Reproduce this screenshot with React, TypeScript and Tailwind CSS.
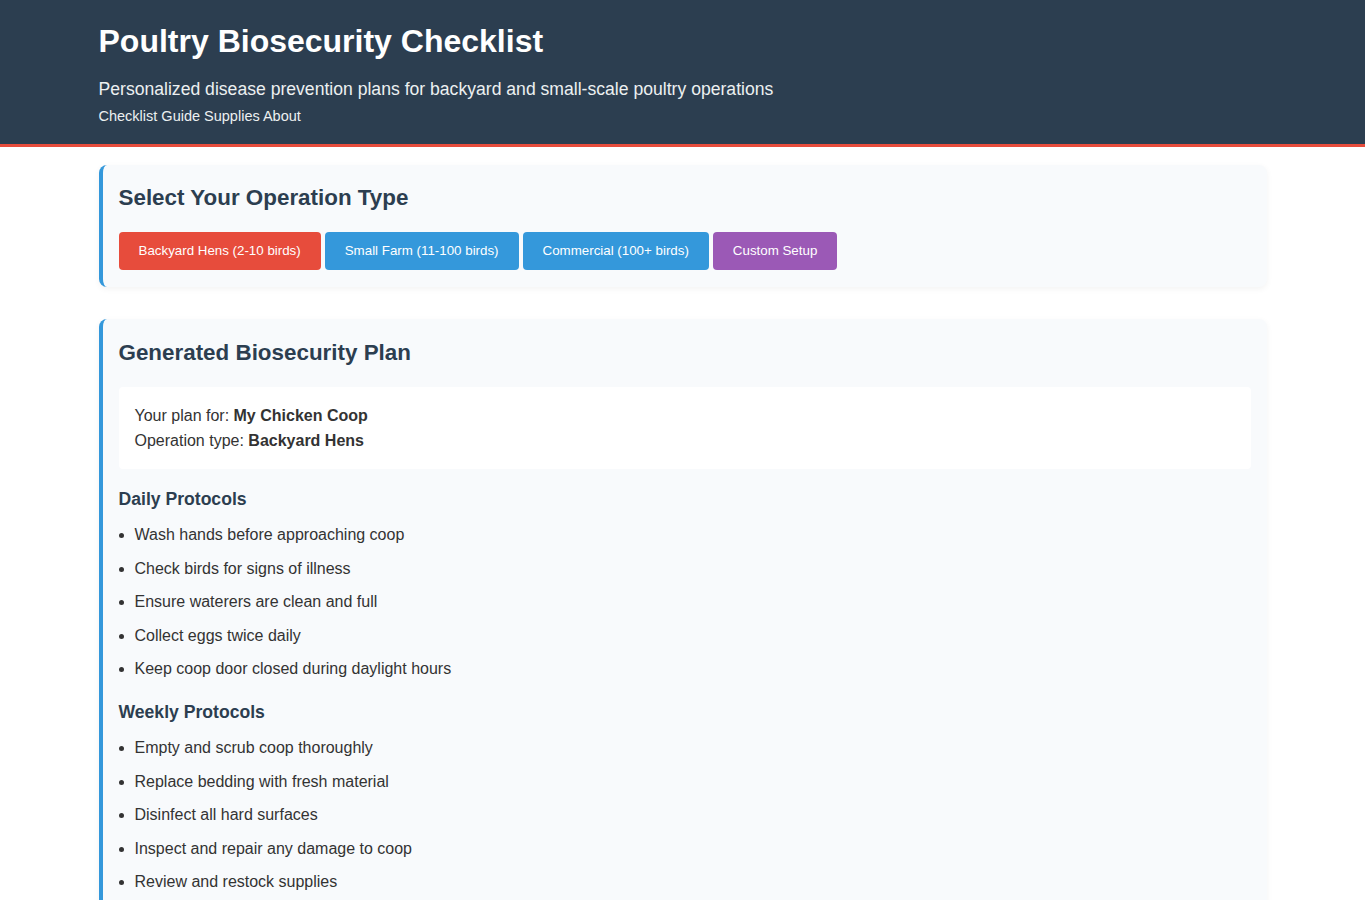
const daily = [
  "Wash hands before approaching coop",
  "Check birds for signs of illness",
  "Ensure waterers are clean and full",
  "Collect eggs twice daily",
  "Keep coop door closed during daylight hours",
];

const weekly = [
  "Empty and scrub coop thoroughly",
  "Replace bedding with fresh material",
  "Disinfect all hard surfaces",
  "Inspect and repair any damage to coop",
  "Review and restock supplies",
];

function ProtocolList({ title, items }: { title: string; items: string[] }) {
  return (
    <div>
      <h3 className="mt-4 mb-2 text-[17.6px] font-bold leading-[29px] text-[#2c3e50]">{title}</h3>
      <ul className="list-disc pl-4">
        {items.map((item) => (
          <li key={item} className="mb-2 leading-[25.6px]">
            {item}
          </li>
        ))}
      </ul>
    </div>
  );
}

export default function App() {
  return (
    <div className="min-h-screen bg-white text-[16px] text-[#333]" style={{ fontFamily: '"Liberation Sans", Arial, sans-serif' }}>
      <header className="bg-[#2c3e50] border-b-[3px] border-[#e74c3c] pt-[23px] pb-[20px] text-white">
        <div className="mx-auto max-w-[1200px] px-4">
          <h1 className="text-[32px] font-bold leading-[37px]">Poultry Biosecurity Checklist</h1>
          <p className="mt-[19px] text-[17.6px] leading-[21px] text-[#ecf0f1]">
            Personalized disease prevention plans for backyard and small-scale poultry operations
          </p>
          <nav className="mt-[8px] text-[14.5px] leading-[16px] text-[#ecf0f1]">Checklist Guide Supplies About</nav>
        </div>
      </header>

      <main className="mx-auto max-w-[1200px] px-4 pt-[18px]">
        <section className="rounded-lg border-l-4 border-[#3498db] bg-[#f8fafc] px-4 pt-[20px] pb-[17px] shadow-[0_2px_6px_rgba(0,0,0,0.05)]">
          <h2 className="text-[22.4px] font-bold leading-[25px] text-[#2c3e50]">Select Your Operation Type</h2>
          <div className="mt-[22px] flex gap-1">
            <button className="rounded bg-[#e74c3c] px-5 py-3 text-[13.333px] leading-[14px] text-white">Backyard Hens (2-10 birds)</button>
            <button className="rounded bg-[#3498db] px-5 py-3 text-[13.333px] leading-[14px] text-white">Small Farm (11-100 birds)</button>
            <button className="rounded bg-[#3498db] px-5 py-3 text-[13.333px] leading-[14px] text-white">Commercial (100+ birds)</button>
            <button className="rounded bg-[#9b59b6] px-5 py-3 text-[13.333px] leading-[14px] text-white">Custom Setup</button>
          </div>
        </section>

        <section className="mt-[32px] rounded-lg border-l-4 border-[#3498db] bg-[#f8fafc] px-4 pt-[21px] pb-4 shadow-[0_2px_6px_rgba(0,0,0,0.05)]">
          <h2 className="text-[22.4px] font-bold leading-[25px] text-[#2c3e50]">Generated Biosecurity Plan</h2>
          <div className="mt-[22px] rounded bg-white p-4 leading-[25px]">
            <p>
              Your plan for: <strong>My Chicken Coop</strong>
            </p>
            <p>
              Operation type: <strong>Backyard Hens</strong>
            </p>
          </div>
          <ProtocolList title="Daily Protocols" items={daily} />
          <ProtocolList title="Weekly Protocols" items={weekly} />
        </section>
      </main>
    </div>
  );
}
